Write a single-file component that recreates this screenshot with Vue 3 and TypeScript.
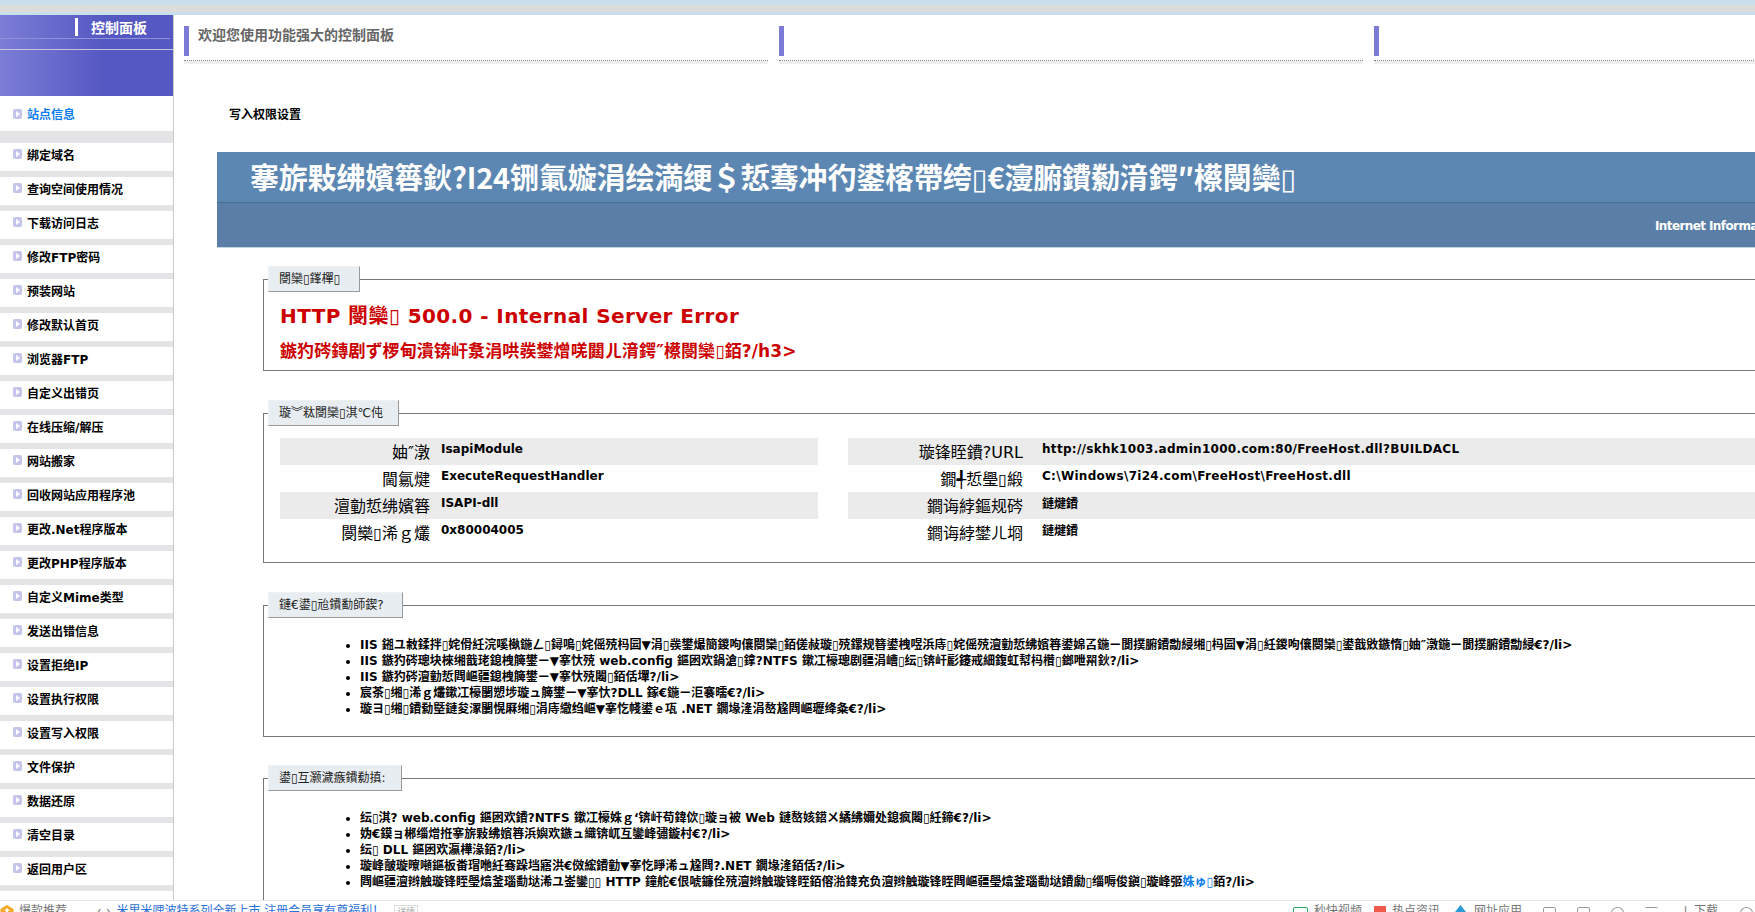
<script setup lang="ts">
const menu: string[] = ['绑定域名','查询空间使用情况','下载访问日志','修改FTP密码','预装网站','修改默认首页','浏览器FTP','自定义出错页','在线压缩/解压','网站搬家','回收网站应用程序池','更改.Net程序版本','更改PHP程序版本','自定义Mime类型','发送出错信息','设置拒绝IP','设置执行权限','设置写入权限','文件保护','数据还原','清空目录','返回用户区']
const rows: { l: string; v: string; l2: string; v2: string; small?: boolean }[] = [
  { l: '妯″潡', v: 'IsapiModule', l2: '璇锋眰鐨?URL', v2: 'http://skhk1003.admin1000.com:80/FreeHost.dll?BUILDACL' },
  { l: '閫氱煡', v: 'ExecuteRequestHandler', l2: '鐗╃悊璺▯緞', v2: 'C:\\Windows\\7i24.com\\FreeHost\\FreeHost.dll' },
  { l: '澶勭悊绋嬪簭', v: 'ISAPI-dll', l2: '鐧诲綍鏂规硶', v2: '鏈煡鐨', small: true },
  { l: '閿欒▯浠ｇ爜', v: '0x80004005', l2: '鐧诲綍鐢ㄦ埛', v2: '鏈煡鐨', small: true },
]
const causes: string[] = [
  'IIS 鎺ユ敹鍒拌▯姹傦紝浣嗘槸鍦ㄥ▯鐞嗚▯姹傜殑杩囩▼涓▯彂鐢熶簡鍐呴儴閿欒▯銆傞敊璇▯殑鏍规簮鍙栧喅浜庤▯姹傜殑澶勭悊绋嬪簭鍙婂叾鍦ㄧ閬撲腑鐨勪綅缃▯杩囩▼涓▯紝鍐呴儴閿欒▯鍙戠敓鏃惰▯妯″潡鍦ㄧ閬撲腑鐨勪綅€?/li>',
  'IIS 鏃犳硶璁块棶缃戠珯鎴栧簲鐢ㄧ▼搴忕殑 web.config 鏂囦欢鍋滄▯鎿?NTFS 鏉冮檺璁剧疆涓嶆▯纭▯锛屽彲鑳戒細鍑虹幇杩欑▯鎯呭喌鈥?/li>',
  'IIS 鏃犳硶澶勭悊閰嶇疆鎴栧簲鐢ㄧ▼搴忕殑闂▯銆佸墠?/li>',
  '宸茶▯缃▯浠ｇ爜鏉冮檺闄愬埗璇ュ簲鐢ㄧ▼搴忕?DLL 鎵€鍦ㄧ洰褰曘€?/li>',
  '璇ヨ▯缃▯鐨勬墍鏈夋潈闄愰厤缃▯涓庤繖绉嶇▼搴忔帴鍙ｅ瓨 .NET 鐗堟湰涓嶅尮閰嶇瓑绛夈€?/li>',
]
const actions: string[] = [
  '纭▯淇? web.config 鏂囦欢鐨?NTFS 鏉冮檺姝ｇ‘锛屽苟鍏佽▯璇ョ被 Web 鏈嶅姟鍣ㄨ繘绋嬭处鎴疯闂▯紝鍗€?/li>',
  '妫€鏌ョ郴缁熷拰搴旂敤绋嬪簭浜嬩欢鏃ュ織锛屼互鑾峰彇鏇村€?/li>',
  '纭▯ DLL 鏂囦欢瀛樺湪銆?/li>',
  '璇峰皾璇曢噸鏂板畨瑁咃紝骞跺垱寤洪€傚綋鐨勭▼搴忔睜浠ュ尮閰?.NET 鐗堟湰銆佸?/li>',
]
</script>

<template>
  <div class="page">
    <div class="strip"><div class="strip-gray"></div></div>
    <div class="body">
      <aside class="side">
        <div class="side-head">
          <div class="side-title">
            <div class="title-row"><span class="title-bar"></span><span class="title-text">控制面板</span></div>
          </div>
        </div>
        <a class="first item active"><i class="ico"></i>站点信息</a>
        <a v-for="m in menu" :key="m" class="item"><i class="ico"></i>{{ m }}</a>
      </aside>
      <main class="main">
        <div class="panels">
          <div class="panel"><div class="panel-in"><span class="panel-bar"></span><span class="panel-text">欢迎您使用功能强大的控制面板</span></div></div>
          <div class="panel"><div class="panel-in"><span class="panel-bar"></span></div></div>
          <div class="panel"><div class="panel-in"><span class="panel-bar"></span></div></div>
        </div>
        <div class="crumb">写入权限设置</div>
        <div class="content">
          <div class="banner">
            <h1 class="b-title">搴旂敤绋嬪簭鈥?I24铏氭嫙涓绘満绠＄悊骞冲彴鍙楁帶绔▯€濅腑鐨勬湇鍔″櫒閿欒▯</h1>
            <div class="b-sub">Internet Information Services 7.5</div>
          </div>
          <fieldset class="fs fs1">
            <legend>閿欒▯鎽樿▯</legend>
            <h2>HTTP 閿欒▯ 500.0 - Internal Server Error</h2>
            <h3>鏃犳硶鏄剧ず椤甸潰锛屽洜涓哄彂鐢熷唴閮ㄦ湇鍔″櫒閿欒▯銆?/h3&gt;</h3>
          </fieldset>
          <fieldset class="fs fs2">
            <legend>璇︾粏閿欒▯淇℃伅</legend>
            <div class="tables">
              <div v-for="(r, i) in rows" :key="r.l" class="row" :class="{ odd: i % 2 === 0 }">
                <div class="cell left"><span class="lab">{{ r.l }}</span><span class="val">{{ r.v }}</span></div>
                <div class="cell right"><span class="lab">{{ r.l2 }}</span><span class="val" :class="{ small: r.small }">{{ r.v2 }}</span></div>
              </div>
            </div>
          </fieldset>
          <fieldset class="fs fs3">
            <legend>鏈€鍙▯兘鐨勫師鍥?</legend>
            <ul><li v-for="c in causes" :key="c">{{ c }}</li></ul>
          </fieldset>
          <fieldset class="fs fs4">
            <legend>鍙▯互灏濊瘯鐨勬搷:</legend>
            <ul>
              <li v-for="c in actions" :key="c">{{ c }}</li>
              <li>閰嶇疆澶辫触璇锋眰璺熻釜瑙勫垯浠ユ崟鑾▯▯ HTTP 鐘舵€佷唬鐮佺殑澶辫触璇锋眰銆傛湁鍏充负澶辫触璇锋眰閰嶇疆璺熻釜瑙勫垯鐨勮▯缁嗕俊鎭▯璇峰弬<a class="lnk">姝ゅ▯</a>銆?/li&gt;</li>
            </ul>
          </fieldset>
        </div>
      </main>
    </div>
    <footer class="status">
      <div class="st-left">
        <svg class="hex" width="14" height="14" viewBox="0 0 14 14"><path d="M7 0 13.5 4V14H.5V4Z" fill="#f5a623"/><path d="M7 3 10 6H8V9H6V6H4Z" fill="#fff"/></svg>
        <span class="st-gray hot">爆款推荐</span>
        <span class="st-gray arrows">‹ ›</span>
        <span class="st-link">米里米哩波特系列全新上市 注册会员享有尊福利！</span>
        <span class="st-box">详情</span>
      </div>
      <div class="st-right">
        <span class="gb"></span><span class="st-gray">秒快视频</span>
        <span class="rb"></span><span class="st-gray">热点资讯</span>
        <svg class="tree" width="11" height="12" viewBox="0 0 11 12"><path d="M5.5 0 11 7H0Z" fill="#2a9bd8"/></svg><span class="st-gray">网址应用</span>
        <span class="ic"></span><span class="ic"></span><span class="ic round"></span><span class="ic thin"></span>
        <span class="st-gray dl">↓ 下载</span>
        <span class="ic round last"></span>
      </div>
    </footer>
  </div>
</template>

<style>
html, body { margin: 0; overflow: hidden; background: #fff; }
</style>

<style scoped>
.page { width: 1755px; height: 912px; overflow: hidden; display: flex; flex-direction: column; background: #fff; font-family: "DejaVu Sans", "Noto Sans CJK SC", sans-serif; color: #000; }
.strip { height: 15px; flex: none; background: #c9dfec; padding-top: 5px; box-sizing: border-box; }
.strip-gray { height: 7px; background: #dcdcdc; }
.body { flex: 1; min-height: 0; display: flex; overflow: hidden; }

.side { width: 174px; flex: none; box-sizing: border-box; border-right: 1px solid #ccc; overflow: hidden; }
.side-head { height: 81px; background: linear-gradient(90deg, #7b7dd6 0%, #5557c2 62%); }
.side-title { height: 35px; box-sizing: border-box; border-bottom: 1px solid #c5c5dd; padding-top: 3px; }
.title-row { height: 21px; box-sizing: border-box; width: 170px; border-bottom: 1px solid #8f90d8; display: flex; padding-left: 75px; }
.title-bar { width: 3px; height: 18px; background: #fff; }
.title-text { margin-left: 13px; color: #fff; font-size: 14px; font-weight: 700; line-height: 20px; }

.item { display: flex; align-items: center; height: 28px; margin-bottom: 6px; padding: 0 0 6px 13px; box-sizing: border-box; font-size: 12px; font-weight: 700; background: #fff; box-shadow: 0 6px 0 #e4e4e6; }
.first { height: 35px; margin-bottom: 12px; padding-bottom: 0; box-shadow: 0 12px 0 #e4e4e6; }
.active { color: #0a7cf0; }
.ico { width: 9px; height: 10px; margin-right: 5px; border-radius: 2px; background: #c5c5ea; position: relative; flex: none; }
.ico::after { content: ""; position: absolute; left: 3px; top: 2px; border-left: 4px solid #fff; border-top: 3px solid transparent; border-bottom: 3px solid transparent; }

.main { flex: 1; min-width: 0; padding-left: 10px; overflow: hidden; }
.panels { display: flex; gap: 11px; width: 1800px; padding-top: 11px; }
.panel { width: 584px; flex: none; border-bottom: 3px solid #eee; }
.panel-in { height: 34px; border-bottom: 1px dotted #888; display: flex; }
.panel-bar { width: 5px; height: 30px; background: #7b7bd6; flex: none; }
.panel-text { margin-left: 9px; font-size: 14px; font-weight: 700; color: #666; line-height: 18px; }
.crumb { margin: 42px 0 0 45px; font-size: 12px; font-weight: 700; line-height: 18px; height: 18px; }
.content { width: 1700px; margin: 28px 0 0 33px; }

.banner { height: 96px; background: #5c87b2; box-sizing: border-box; border-bottom: 1px solid #c6d4e2; }
.b-title { margin: 0; height: 51px; box-sizing: border-box; padding-left: 33px; border-bottom: 1px solid #4a6c8f; color: #fff; font-family: "Noto Sans CJK SC", "DejaVu Sans", sans-serif; font-size: 29px; font-weight: 700; line-height: 49px; white-space: nowrap; letter-spacing: -.15px; }
.b-sub { height: 44px; background: #5a7ea5; color: #fff; font-size: 12px; font-weight: 700; padding-left: 1438px; line-height: 46px; white-space: nowrap; letter-spacing: -.6px; }

.fs { margin: 0 0 0 46px; padding: 0; border: 0; border-top: 1px solid #777; border-left: 1px solid #777; border-bottom: 1px solid #777; min-width: 0; }
.fs legend { margin-left: 4px; padding: 0 15px 0 10px; height: 26px; box-sizing: border-box; line-height: 25px; font-size: 12px; background: #e8edf1; color: #222; border: 1px solid #eef1f4; border-right-color: #999; border-bottom-color: #999; }
.fs1 legend { padding-right: 19px; }
.fs3 legend { padding-right: 18px; }
.fs1 { margin-top: 18px; height: 103px; }
h2 { margin: 10px 0 0 16px; font-size: 20px; font-weight: 700; line-height: 28px; letter-spacing: .4px; color: #c00; white-space: nowrap; }
h3 { margin: 10px 0 0 16px; font-size: 17px; font-weight: 700; line-height: 22px; letter-spacing: .1px; color: #c00; white-space: nowrap; }
.fs2 { margin-top: 29px; height: 161px; }
.tables { margin: 12px 0 0 16px; }
.row { display: flex; height: 27px; gap: 30px; }
.cell { display: flex; flex: none; }
.cell.left { width: 538px; }
.cell.right { width: 1000px; }
.odd .cell { background: #ebebeb; }
.lab { font-size: 16px; line-height: 27px; text-align: right; flex: none; padding-top: 1px; }
.left .lab { width: 150px; }
.right .lab { width: 175px; }
.val { margin-left: 11px; font-size: 12px; font-weight: 700; line-height: 23px; white-space: nowrap; }
.right .val { margin-left: 19px; letter-spacing: .3px; }
.right .val.small { letter-spacing: 0; line-height: 25px; }
.fs3 { margin-top: 29px; height: 143px; }
.fs4 { margin-top: 28px; height: 200px; border-bottom: 0; }
ul { margin: 0; padding: 0 0 0 96px; font-size: 12px; font-weight: 700; line-height: 16px; white-space: nowrap; }
.fs3 ul { margin-top: 19px; }
.fs4 ul { margin-top: 19px; }
.lnk { color: #0a7cf0; }

.status { height: 12px; flex: none; box-sizing: border-box; border-top: 1px solid #e5e5e5; overflow: hidden; display: flex; justify-content: space-between; align-items: flex-start; font-size: 12px; line-height: 12px; }
.st-left, .st-right { display: flex; align-items: flex-start; padding-top: 4px; }
.hex { margin-top: 0; }
.st-gray { color: #777; white-space: nowrap; }
.hot { margin-left: 5px; }
.arrows { margin-left: 30px; }
.st-link { color: #2c6fd6; margin-left: 6px; white-space: nowrap; }
.st-box { margin-left: 10px; font-size: 9px; border: 1px solid #ddd; color: #aaa; padding: 0 2px; }
.gb { width: 13px; height: 12px; border: 1px solid #27ae60; border-radius: 2px; margin-right: 6px; margin-top: 2px; }
.rb { width: 12px; height: 12px; background: #f0594c; margin: 1px 6px 0 12px; }
.tree { margin: 0 8px 0 15px; }
.ic { width: 13px; height: 12px; border: 1px solid #999; border-radius: 2px; margin-left: 21px; box-sizing: border-box; margin-top: 2px; }
.round { border-radius: 50%; }
.thin { border-width: 1px 0 0 0; }
.dl { margin-left: 22px; }
.last { margin-left: 22px; margin-right: 2px; }
</style>
